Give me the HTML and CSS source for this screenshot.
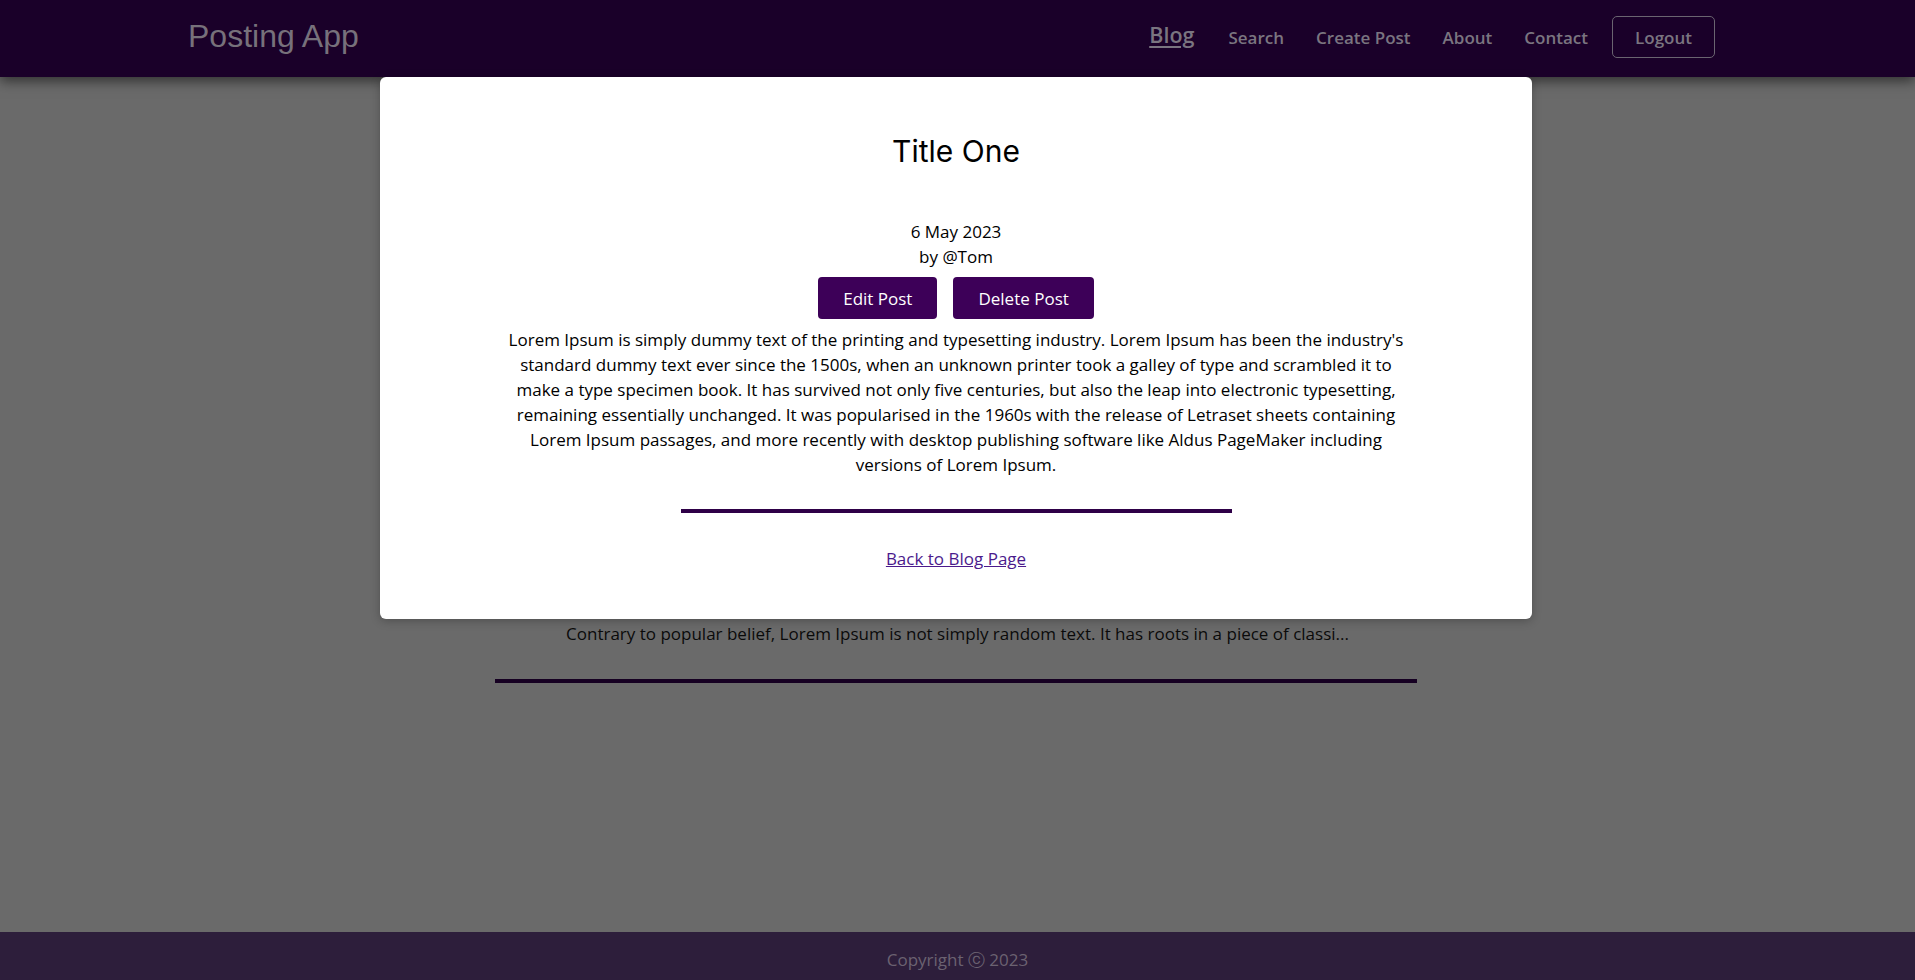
FILE: index.html
```html
<!DOCTYPE html>
<html lang="en">
<head>
<meta charset="utf-8">
<title>Posting App</title>
<link rel="stylesheet" href="styles.css">
</head>
<body>
<div class="page">
  <header class="navbar">
    <div class="nav-inner">
      <a class="brand" href="#">Posting App</a>
      <nav class="nav-links">
        <a class="nav-link active" href="#">Blog</a>
        <a class="nav-link" href="#">Search</a>
        <a class="nav-link" href="#">Create Post</a>
        <a class="nav-link" href="#">About</a>
        <a class="nav-link" href="#">Contact</a>
        <button class="logout">Logout</button>
      </nav>
    </div>
  </header>

  <main class="content">
    <div class="post-list">
      <article class="post">
        <h2 class="post-title">Title One</h2>
        <p class="post-excerpt">Lorem Ipsum is simply dummy text of the printing and typesetting industry. Lorem Ipsum has been the indus...</p>
        <div class="post-rule"></div>
      </article>
      <article class="post">
        <h2 class="post-title">Title Two</h2>
        <p class="post-excerpt">Contrary to popular belief, Lorem Ipsum is not simply random text. It has roots in a piece of classi...</p>
        <div class="post-rule"></div>
      </article>
    </div>
  </main>

  <footer class="footer">
    <p>Copyright &#9426; 2023</p>
  </footer>

  <div class="modal">
    <h1 class="modal-title">Title One</h1>
    <div class="meta">
      <div>6 May 2023</div>
      <div>by @Tom</div>
    </div>
    <div class="actions">
      <button class="btn">Edit Post</button>
      <button class="btn">Delete Post</button>
    </div>
    <p class="body-text">Lorem Ipsum is simply dummy text of the printing and typesetting industry. Lorem Ipsum has been the industry's standard dummy text ever since the 1500s, when an unknown printer took a galley of type and scrambled it to make a type specimen book. It has survived not only five centuries, but also the leap into electronic typesetting, remaining essentially unchanged. It was popularised in the 1960s with the release of Letraset sheets containing Lorem Ipsum passages, and more recently with desktop publishing software like Aldus PageMaker including versions of Lorem Ipsum.</p>
    <div class="divider"></div>
    <a class="back-link" href="#">Back to Blog Page</a>
  </div>
</div>
</body>
</html>
```

FILE: styles.css
```css
* { box-sizing: border-box; }

html, body {
  margin: 0;
  padding: 0;
  height: 100%;
}

body {
  font-family: "Open Sans", "DejaVu Sans", sans-serif;
  font-size: 17px;
  color: #000;
}

.page {
  position: relative;
  min-height: 100vh;
  display: flex;
  flex-direction: column;
}

/* ---------- navbar ---------- */
.navbar {
  height: 77px;
  background: #1a0029;
  box-shadow: 0 4px 12px rgba(0, 0, 0, 0.55);
  position: relative;
  z-index: 2;
}

.nav-inner {
  height: 100%;
  padding: 0 200px 3px 188px;
  display: flex;
  align-items: center;
  justify-content: space-between;
}

.brand {
  font-family: "Liberation Sans", Arial, sans-serif;
  font-size: 32px;
  color: #77717b;
  text-decoration: none;
  padding-bottom: 2px;
}

.nav-links {
  display: flex;
  align-items: center;
  gap: 32px;
}

.nav-link {
  color: #7a7580;
  text-decoration: none;
  font-size: 17px;
  font-weight: 600;
  letter-spacing: 0;
}

.nav-link.active {
  font-size: 21.5px;
  text-decoration: underline;
  text-underline-offset: 3px;
  margin-top: -6px;
  margin-right: 2px;
}

.logout {
  font-family: inherit;
  font-size: 17px;
  font-weight: 600;
  color: #7a7580;
  background: transparent;
  border: 1px solid #6a6470;
  border-radius: 5px;
  width: 103px;
  height: 42px;
  margin-left: -8px;
}

/* ---------- background content ---------- */
.content {
  flex: 1;
  background: #6a6a6a;
  text-align: center;
}

.post-list {
  padding-top: 284px;
}

.post {
  display: flex;
  flex-direction: column;
  align-items: center;
}

.post-title {
  font-family: Inter, sans-serif;
  font-weight: 400;
  font-size: 30px;
  line-height: 40px;
  margin: 40px 0 20px;
}

.post-excerpt {
  margin: 0;
  line-height: 24px;
  color: #0a0a0a;
}

.post-rule {
  width: 922px;
  height: 4px;
  background: #160022;
  margin-top: 33px;
  margin-right: 3px;
}

/* ---------- footer ---------- */
.footer {
  height: 48px;
  background: #2d1e3b;
  display: flex;
  align-items: center;
  justify-content: center;
}

.footer p {
  margin: 0;
  padding-top: 8px;
  color: #6b6271;
  font-size: 17px;
}

/* ---------- modal ---------- */
.modal {
  position: absolute;
  top: 77px;
  left: 380px;
  width: 1152px;
  background: #fff;
  border-radius: 6px;
  box-shadow: 0 2px 10px rgba(0, 0, 0, 0.25);
  padding: 54px 0 48px;
  display: flex;
  flex-direction: column;
  align-items: center;
  z-index: 3;
}

.modal-title {
  font-family: Inter, sans-serif;
  font-weight: 400;
  font-size: 30px;
  line-height: 40px;
  margin: 0;
}

.meta {
  margin-top: 48px;
  line-height: 25px;
  text-align: center;
}

.actions {
  display: flex;
  gap: 16px;
  margin-top: 8px;
}

.btn {
  font-family: inherit;
  font-size: 17px;
  color: #fff;
  background: #3d0058;
  border: none;
  border-radius: 4px;
  height: 42px;
  padding: 0 25px;
}

.body-text {
  width: 912px;
  margin: 8px 0 0;
  line-height: 25px;
  text-align: center;
}

.divider {
  width: 551px;
  height: 4px;
  background: #2e0047;
  margin-top: 32px;
}

.back-link {
  margin-top: 34px;
  line-height: 24px;
  color: #4b1a8c;
  text-decoration: underline;
}
```
